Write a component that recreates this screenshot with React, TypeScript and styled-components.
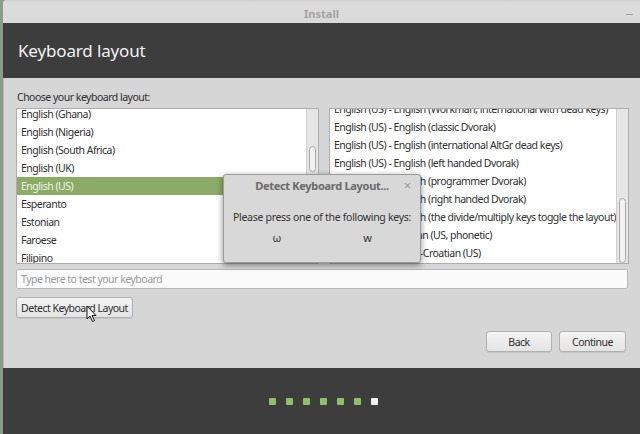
import React from 'react';
import styled, { createGlobalStyle } from 'styled-components';

const leftLayouts = [
  'English (Ghana)',
  'English (Nigeria)',
  'English (South Africa)',
  'English (UK)',
  'English (US)',
  'Esperanto',
  'Estonian',
  'Faroese',
  'Filipino',
];

const rightLayouts = [
  'English (US) - English (Workman, international with dead keys)',
  'English (US) - English (classic Dvorak)',
  'English (US) - English (international AltGr dead keys)',
  'English (US) - English (left handed Dvorak)',
  'English (US) - English (programmer Dvorak)',
  'English (US) - English (right handed Dvorak)',
  'English (US) - English (the divide/multiply keys toggle the layout)',
  'English (US) - Russian (US, phonetic)',
  'English (US) - Serbo-Croatian (US)',
];

const steps = [true, true, true, true, true, true, false];

const App = () => {
  return (
    <>
      <GlobalStyle />
      <Window>
        <TitleBar>
          <span>Install</span>
          <Minimize />
        </TitleBar>
        <Header>Keyboard layout</Header>
        <Content>
          <Label>Choose your keyboard layout:</Label>
          <Lists>
            <ListBox>
              <Rows $offset={-4}>
                {leftLayouts.map((name) => (
                  <Row key={name} $selected={name === 'English (US)'}>
                    {name}
                  </Row>
                ))}
              </Rows>
              <Track>
                <Thumb $top={37} $height={24} />
              </Track>
            </ListBox>
            <ListBox>
              <Rows $offset={-9}>
                {rightLayouts.map((name) => (
                  <Row key={name}>{name}</Row>
                ))}
              </Rows>
              <Track>
                <Thumb $top={89} $height={63} />
              </Track>
            </ListBox>
          </Lists>
          <TestInput placeholder="Type here to test your keyboard" />
          <DetectButton>
            Detect Keyboard Layout
            <Cursor viewBox="0 0 12 18">
              <path d="M1 1 L1 14 L4 11 L6.5 16.5 L8.5 15.5 L6 10.5 L10 10.5 Z" fill="#fff" stroke="#111" strokeWidth="1" />
            </Cursor>
          </DetectButton>
          <Actions>
            <ActionButton $width={66}>Back</ActionButton>
            <ActionButton $width={67}>Continue</ActionButton>
          </Actions>

          <Dialog>
            <DialogTitle>
              Detect Keyboard Layout...
              <Close>×</Close>
            </DialogTitle>
            <DialogText>Please press one of the following keys:</DialogText>
            <Keys>
              <span>ω</span>
              <span>w</span>
            </Keys>
          </Dialog>
        </Content>
        <BottomBar>
          {steps.map((done, i) => (
            <Dot key={i} $done={done} />
          ))}
        </BottomBar>
      </Window>
    </>
  );
};

const GlobalStyle = createGlobalStyle`
  body {
    margin: 0;
    background: #8f9a86;
    font-family: "Noto Sans", "Open Sans", sans-serif;
    overflow: hidden;
  }
`;

const Window = styled.div`
  margin-left: 3px;
  width: 637px;
  height: 434px;
  display: flex;
  flex-direction: column;
  background: #d6d6d6;
  border-radius: 4px 0 0 0;
  overflow: hidden;
`;

const TitleBar = styled.div`
  position: relative;
  height: 23px;
  box-sizing: border-box;
  padding-top: 3px;
  flex-shrink: 0;
  display: flex;
  align-items: center;
  justify-content: center;
  background: linear-gradient(#cfcfcf 0, #dcdcdc 3px, #dadada 100%);
  color: #a3a3a3;
  font-size: 11px;
  font-weight: bold;
`;

const Minimize = styled.div`
  position: absolute;
  right: 7px;
  top: 14px;
  width: 7px;
  height: 1px;
  background: #9e9e9e;
`;

const Header = styled.div`
  height: 55px;
  flex-shrink: 0;
  display: flex;
  align-items: center;
  padding-left: 15px;
  background: #3d3d3d;
  color: #f2f2f2;
  font-size: 17px;
  letter-spacing: -0.15px;
`;

const Content = styled.div`
  position: relative;
  flex: 1;
  display: flex;
  flex-direction: column;
  padding: 12px 12px 0 12px;
  background: #d6d6d6;
  border-left: 1px solid #bcbcbc;
  font-size: 10.5px;
  letter-spacing: -0.5px;
`;

const Label = styled.div`
  color: #2e2e2e;
  line-height: 14px;
  padding-left: 1px;
`;

const Lists = styled.div`
  display: grid;
  grid-template-columns: 303px 300px;
  gap: 10px;
  height: 156px;
  margin-top: 4px;
`;

const ListBox = styled.div`
  display: flex;
  background: #ffffff;
  border: 1px solid #adadad;
  overflow: hidden;
`;

const Rows = styled.div<{ $offset: number }>`
  flex: 1;
  margin-top: ${(p) => p.$offset}px;
  min-width: 0;
`;

const Row = styled.div<{ $selected?: boolean }>`
  height: 18px;
  line-height: 18px;
  padding-left: 4px;
  white-space: nowrap;
  color: ${(p) => (p.$selected ? '#eef5e6' : '#303030')};
  background: ${(p) => (p.$selected ? '#8cab69' : 'transparent')};
`;

const Track = styled.div`
  position: relative;
  width: 11px;
  flex-shrink: 0;
  background: #e6e6e6;
  border-left: 1px solid #d0d0d0;
`;

const Thumb = styled.div<{ $top: number; $height: number }>`
  position: absolute;
  left: 2px;
  top: ${(p) => p.$top}px;
  width: 5px;
  height: ${(p) => p.$height}px;
  border: 1px solid #a9a9a9;
  border-radius: 4px;
  background: #f2f2f2;
`;

const TestInput = styled.input`
  margin-top: 5px;
  height: 20px;
  box-sizing: border-box;
  border: 1px solid #b9b9b9;
  border-radius: 2px;
  background: #fbfbfb;
  padding: 0 4px;
  font-family: inherit;
  font-size: inherit;
  letter-spacing: inherit;
  outline: none;
  &::placeholder {
    color: #9a9a9a;
  }
`;

const ButtonBase = styled.button`
  height: 21px;
  box-sizing: border-box;
  border: 1px solid #b1b1b1;
  border-radius: 3px;
  background: linear-gradient(#f4f4f4, #e4e4e4);
  box-shadow: 0 1px 0 rgba(0, 0, 0, 0.08);
  font-family: inherit;
  font-size: inherit;
  letter-spacing: inherit;
  color: #2e2e2e;
  padding: 0;
`;

const DetectButton = styled(ButtonBase)`
  position: relative;
  align-self: flex-start;
  width: 117px;
  margin-top: 8px;
`;

const Cursor = styled.svg`
  position: absolute;
  left: 69px;
  top: 7px;
  width: 12px;
  height: 18px;
`;

const Actions = styled.div`
  display: flex;
  justify-content: flex-end;
  gap: 7px;
  margin-top: 13px;
  padding-right: 2px;
`;

const ActionButton = styled(ButtonBase)<{ $width: number }>`
  width: ${(p) => p.$width}px;
`;

const Dialog = styled.div`
  position: absolute;
  left: 219px;
  top: 96px;
  width: 198px;
  height: 89px;
  box-sizing: border-box;
  background: #d8d8d8;
  border: 1px solid #9c9c9c;
  border-radius: 3px;
  box-shadow: 0 2px 6px rgba(0, 0, 0, 0.45);
  display: flex;
  flex-direction: column;
  align-items: center;
  letter-spacing: -0.3px;
`;

const DialogTitle = styled.div`
  position: relative;
  width: 100%;
  text-align: center;
  margin-top: 4px;
  line-height: 14px;
  font-size: 11px;
  font-weight: bold;
  color: #6a6a6a;
`;

const Close = styled.span`
  position: absolute;
  right: 9px;
  top: -1px;
  font-weight: normal;
  font-size: 13px;
  color: #9a9a9a;
`;

const DialogText = styled.div`
  margin-top: 17px;
  color: #333;
`;

const Keys = styled.div`
  display: flex;
  justify-content: space-between;
  width: 99px;
  margin-top: 6px;
  font-size: 11px;
  color: #333;
`;

const BottomBar = styled.div`
  height: 66px;
  flex-shrink: 0;
  display: flex;
  align-items: center;
  justify-content: center;
  gap: 10px;
  background: #3d3d3d;
  padding-left: 3px;
`;

const Dot = styled.div<{ $done: boolean }>`
  width: 7px;
  height: 7px;
  border-radius: 1px;
  background: ${(p) => (p.$done ? '#8ec06a' : '#f2f2f2')};
`;

export default App;
